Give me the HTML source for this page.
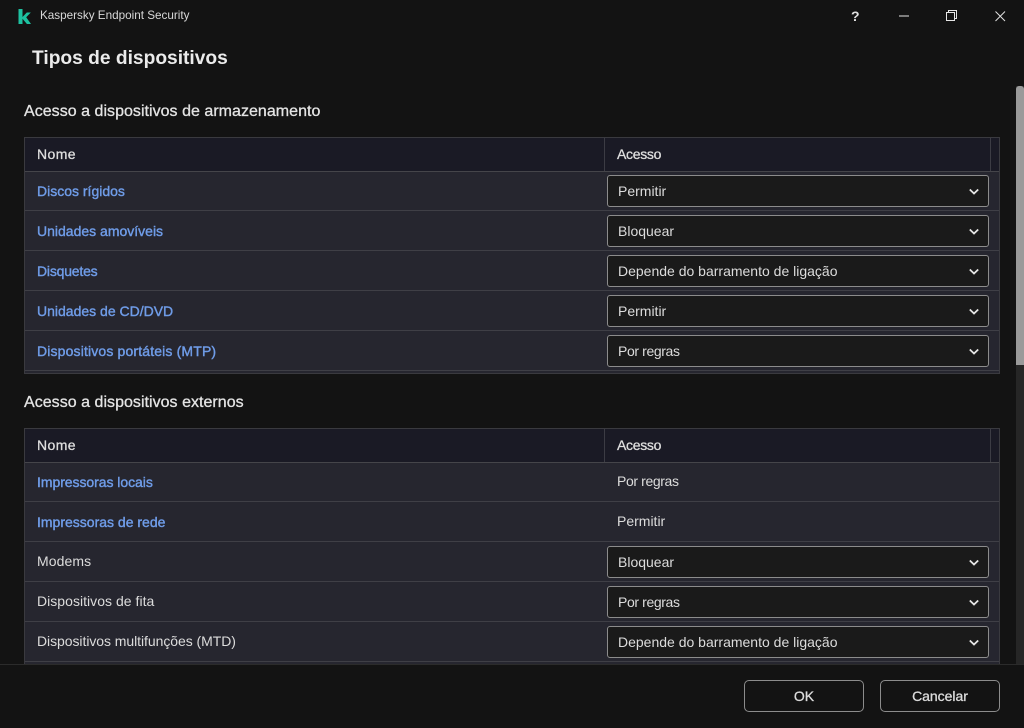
<!DOCTYPE html>
<html lang="pt">
<head>
<meta charset="utf-8">
<title>Kaspersky Endpoint Security</title>
<style>
html,body{margin:0;padding:0;width:1024px;height:728px;overflow:hidden;background:#131313}
body{position:relative;font-family:"Liberation Sans",sans-serif;font-size:14px;color:#dcdcdc}
.a{position:absolute;white-space:nowrap}
.t{line-height:20px;font-size:14px}
.b{font-weight:bold}
.h2{font-size:16px;line-height:22px;color:#e4e4e4;-webkit-text-stroke:.3px #e4e4e4}
.lnk{color:#6f9ce8;-webkit-text-stroke:.4px #6f9ce8;font-size:14px;line-height:20px}
.hd{color:#dedede;-webkit-text-stroke:.3px #dedede;font-size:14px;line-height:20px}
.tbl{position:absolute;left:24px;width:974px;background:#26262f;border:1px solid #3a3a3f;box-sizing:content-box}
.head{position:absolute;left:0;top:0;width:100%;height:33px;background:#1a1a25;border-bottom:1px solid #45454a}
.vs{position:absolute;top:0;width:1px;height:33px;background:#3c3c44}
.sep{position:absolute;left:0;width:100%;height:1px;background:#3f3f46}
.sel{position:absolute;left:607px;width:382px;height:32px;box-sizing:border-box;background:#1a1a1a;border:1px solid #8c8c8c;border-radius:3px;color:#dcdcdc;padding-left:10px;line-height:30px;font-size:14px;white-space:nowrap}
.sel svg{position:absolute;right:9px;top:12px}
.btn{position:absolute;top:680px;width:120px;height:32px;box-sizing:border-box;border:1px solid #8c8c8c;border-radius:5px;text-align:center;line-height:30px;font-size:14px;color:#dcdcdc;-webkit-text-stroke:.3px #dcdcdc;background:#131313}
.pr{letter-spacing:-.38px}
</style>
</head>
<body>
<svg class="a" style="left:18px;top:9px" width="13" height="15" viewBox="0 0 13 15"><path d="M0.500 0h4v15h-4zM4.500 8 8.800 3.500h4L8.200 8.200 13 15H8.900L4.500 9.800z" fill="#1dc1a0"/></svg>
<div class="a" style="left:40px;top:6px;font-size:11.7px;line-height:20px;color:#d8d8d8">Kaspersky Endpoint Security</div>

<div class="a b" style="left:851px;top:6px;font-size:14px;line-height:20px;color:#e0e0e0">?</div>
<svg class="a" style="left:899px;top:10px" width="12" height="12"><path d="M0 6h10" stroke="#e6e6e6" stroke-width="1"/></svg>
<svg class="a" style="left:946px;top:10px" width="12" height="12" fill="none" stroke="#e6e6e6"><path d="M2.500 2V.5h8v8H9"/><rect x="0.500" y="2.500" width="8" height="8"/></svg>
<svg class="a" style="left:995px;top:11px" width="11" height="11" fill="none" stroke="#e0e0e0"><path d="M.5 .5 10 10M10 .5 .5 10"/></svg>

<div class="a b" style="left:32px;top:45px;font-size:19.2px;line-height:28px;color:#ebebeb">Tipos de dispositivos</div>

<div class="a" style="left:1016px;top:86px;width:8px;height:578px;background:#262626"></div>
<div class="a" style="left:1016px;top:86px;width:8px;height:279px;background:#9a9a9a;border-radius:3px 3px 0 0"></div>

<div class="a h2" style="left:24px;top:101px;letter-spacing:.03px">Acesso a dispositivos de armazenamento</div>
<div class="tbl" style="top:137px;height:235px">
  <div class="head"></div>
  <div class="vs" style="left:579px"></div>
  <div class="vs" style="left:965px"></div>
  <div class="sep" style="top:72px"></div>
  <div class="sep" style="top:112px"></div>
  <div class="sep" style="top:152px"></div>
  <div class="sep" style="top:192px"></div>
  <div class="sep" style="top:232px"></div>
</div>
<div class="a hd" style="left:37px;top:144px;letter-spacing:.4px">Nome</div>
<div class="a hd" style="left:617px;top:144px;letter-spacing:-.3px">Acesso</div>
<div class="a lnk" style="left:37px;top:181px">Discos rígidos</div>
<div class="a lnk" style="left:37px;top:221px">Unidades amovíveis</div>
<div class="a lnk" style="left:37px;top:261px;letter-spacing:-.2px">Disquetes</div>
<div class="a lnk" style="left:37px;top:301px">Unidades de CD/DVD</div>
<div class="a lnk" style="left:37px;top:341px;letter-spacing:.15px">Dispositivos portáteis (MTP)</div>
<div class="sel" style="top:175px">Permitir<svg width="10" height="8" fill="none" stroke="#e6e6e6" stroke-width="1.800"><path d="M.8 1.500 5 5.500 9.200 1.500"/></svg></div>
<div class="sel" style="top:215px">Bloquear<svg width="10" height="8" fill="none" stroke="#e6e6e6" stroke-width="1.800"><path d="M.8 1.500 5 5.500 9.200 1.500"/></svg></div>
<div class="sel" style="top:255px">Depende do barramento de ligação<svg width="10" height="8" fill="none" stroke="#e6e6e6" stroke-width="1.800"><path d="M.8 1.500 5 5.500 9.200 1.500"/></svg></div>
<div class="sel" style="top:295px">Permitir<svg width="10" height="8" fill="none" stroke="#e6e6e6" stroke-width="1.800"><path d="M.8 1.500 5 5.500 9.200 1.500"/></svg></div>
<div class="sel" style="top:335px"><span class="pr">Por regras</span><svg width="10" height="8" fill="none" stroke="#e6e6e6" stroke-width="1.800"><path d="M.8 1.500 5 5.500 9.200 1.500"/></svg></div>

<div class="a h2" style="left:24px;top:392px;letter-spacing:.03px">Acesso a dispositivos externos</div>
<div class="tbl" style="top:428px;height:260px">
  <div class="head"></div>
  <div class="vs" style="left:579px"></div>
  <div class="vs" style="left:965px"></div>
  <div class="sep" style="top:72px"></div>
  <div class="sep" style="top:112px"></div>
  <div class="sep" style="top:152px"></div>
  <div class="sep" style="top:192px"></div>
  <div class="sep" style="top:232px"></div>
</div>
<div class="a hd" style="left:37px;top:435px;letter-spacing:.4px">Nome</div>
<div class="a hd" style="left:617px;top:435px;letter-spacing:-.3px">Acesso</div>
<div class="a lnk" style="left:37px;top:472px;letter-spacing:-.05px">Impressoras locais</div>
<div class="a lnk" style="left:37px;top:512px">Impressoras de rede</div>
<div class="a t" style="left:37px;top:551px;letter-spacing:.1px">Modems</div>
<div class="a t" style="left:37px;top:591px;letter-spacing:.03px">Dispositivos de fita</div>
<div class="a t" style="left:37px;top:631px;letter-spacing:-.06px">Dispositivos multifunções (MTD)</div>
<div class="a t pr" style="left:617px;top:471px">Por regras</div>
<div class="a t" style="left:617px;top:511px">Permitir</div>
<div class="sel" style="top:546px">Bloquear<svg width="10" height="8" fill="none" stroke="#e6e6e6" stroke-width="1.800"><path d="M.8 1.500 5 5.500 9.200 1.500"/></svg></div>
<div class="sel" style="top:586px"><span class="pr">Por regras</span><svg width="10" height="8" fill="none" stroke="#e6e6e6" stroke-width="1.800"><path d="M.8 1.500 5 5.500 9.200 1.500"/></svg></div>
<div class="sel" style="top:626px">Depende do barramento de ligação<svg width="10" height="8" fill="none" stroke="#e6e6e6" stroke-width="1.800"><path d="M.8 1.500 5 5.500 9.200 1.500"/></svg></div>

<div class="a" style="left:0;top:664px;width:1024px;height:64px;background:#131313;border-top:1px solid #2b2b2b;box-sizing:border-box"></div>
<div class="btn" style="left:744px">OK</div>
<div class="btn" style="left:880px;letter-spacing:-.03px">Cancelar</div>
</body>
</html>
